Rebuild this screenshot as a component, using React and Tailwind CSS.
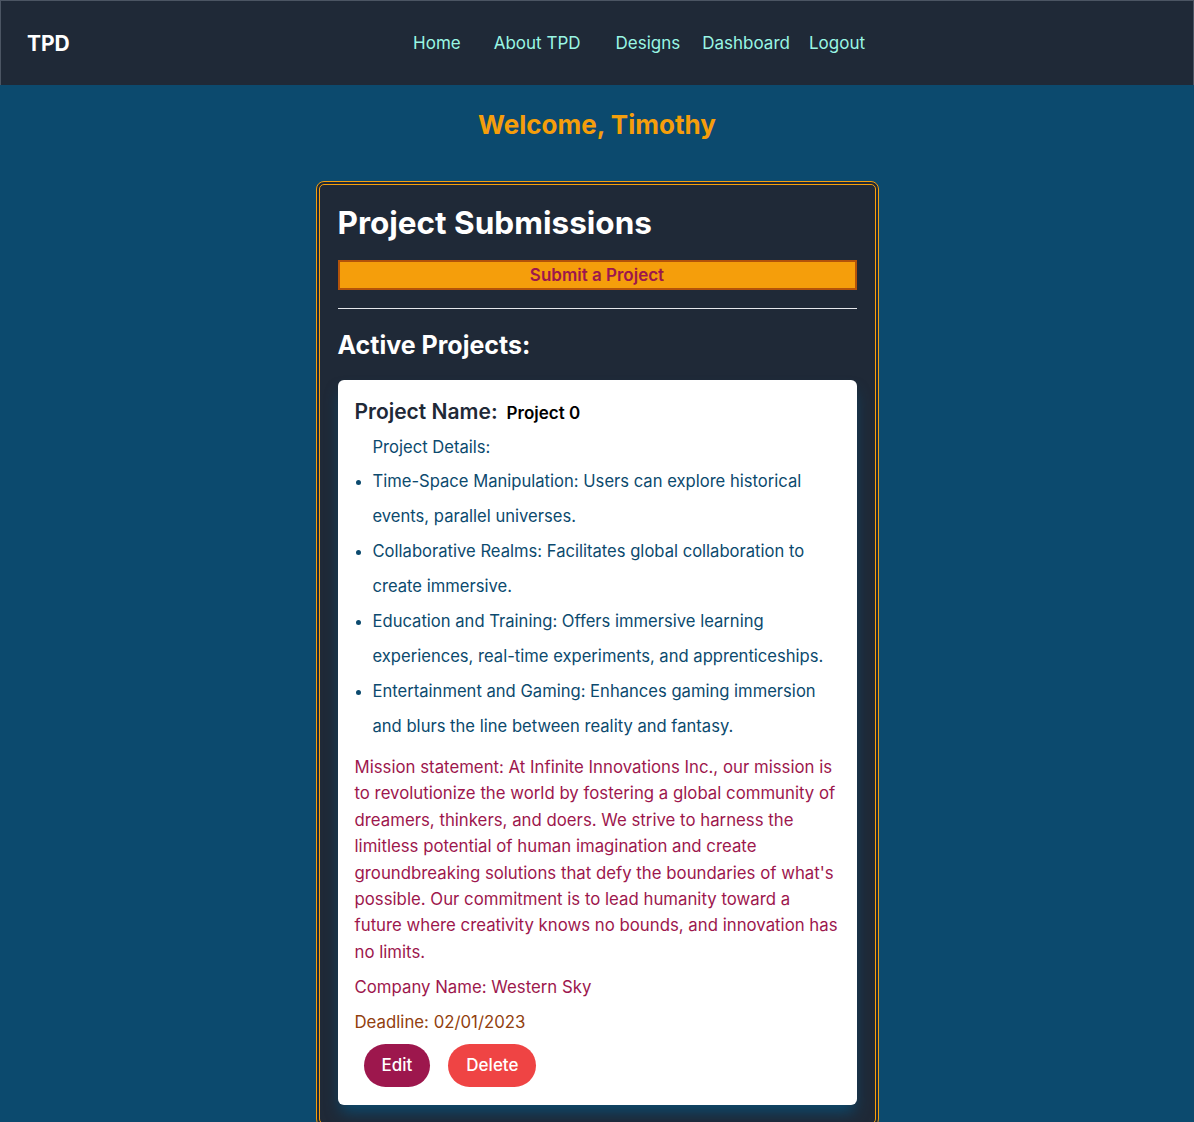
import React from 'react';

const details = [
    'Time-Space Manipulation: Users can explore historical events, parallel universes.',
    'Collaborative Realms: Facilitates global collaboration to create immersive.',
    'Education and Training: Offers immersive learning experiences, real-time experiments, and apprenticeships.',
    'Entertainment and Gaming: Enhances gaming immersion and blurs the line between reality and fantasy.',
];

const mission = "Mission statement: At Infinite Innovations Inc., our mission is to revolutionize the world by fostering a global community of dreamers, thinkers, and doers. We strive to harness the limitless potential of human imagination and create groundbreaking solutions that defy the boundaries of what's possible. Our commitment is to lead humanity toward a future where creativity knows no bounds, and innovation has no limits.";

function NavBar() {
    return (
        <header className="h-[85px] bg-[#1f2937] border-t border-x border-[#4b5563] flex items-center">
            <div className="pl-[26px] text-[21px] font-bold text-white leading-none">TPD</div>
            <nav className="ml-auto mr-[328px] flex items-center text-[17px] text-[#99f6e4] pt-[2px]">
                <a className="mr-[33px]">Home</a>
                <a className="mr-[35px]">About TPD</a>
                <a className="mr-[22px]">Designs</a>
                <a className="mr-[19px]">Dashboard</a>
                <a>Logout</a>
            </nav>
        </header>
    );
}

function ProjectCard() {
    return (
        <div className="bg-white rounded-md px-[17px] pt-[18px] pb-[18px] shadow-[0_10px_15px_-3px_#0c4a6e]">
            <div className="flex items-baseline leading-7">
                <span className="text-[21px] font-semibold text-[#1f2937]">Project Name:</span>
                <span className="ml-[9px] text-[17px] font-semibold text-black">Project 0</span>
            </div>
            <p className="mt-[3px] pl-[18px] leading-[34px] text-[16.6px] text-[#0c4a6e]">Project Details:</p>
            <ul className="list-disc pl-[18px] text-[16.6px] text-[#0c4a6e] leading-[35px]">
                {details.map((d, i) => (
                    <li key={i}>{d}</li>
                ))}
            </ul>
            <p className="mt-[10px] leading-[26.4px] text-[16.8px] text-[#9d174d]">{mission}</p>
            <p className="mt-[9px] leading-[26px] text-[16.8px] text-[#9d174d]">Company Name: Western Sky</p>
            <p className="mt-[9px] leading-[26px] text-[16.8px] text-[#92400e]">Deadline: 02/01/2023</p>
            <div className="mt-[9px] ml-[9px] flex gap-[18px]">
                <button className="h-[43px] px-[18px] rounded-full bg-[#9d174d] text-white text-[17px] font-medium">Edit</button>
                <button className="h-[43px] px-[18px] rounded-full bg-[#ef4444] text-white text-[17px] font-medium">Delete</button>
            </div>
        </div>
    );
}

export default function App() {
    return (
        <div className="min-h-screen bg-[#0c4a6e] font-['Inter',sans-serif]">
            <NavBar />
            <h1 className="pt-6 text-center text-[26px] leading-8 font-bold text-[#f59e0b]">Welcome, Timothy</h1>
            <div className="mt-10 mx-auto w-[563px] bg-[#1f2937] border-4 border-double border-[#f59e0b] rounded-lg px-[18px] pt-[20px] pb-[18px]">
                <h2 className="text-[31.5px] leading-9 font-bold text-white">Project Submissions</h2>
                <button className="mt-[19px] w-full h-[30px] pt-[1px] bg-[#f59e0b] border-2 border-[#b45309] text-[#9d174d] text-[17px] font-semibold">
                    Submit a Project
                </button>
                <hr className="mt-[18px] border-[#e5e7eb]" />
                <h3 className="mt-5 text-[25px] leading-8 font-bold text-white">Active Projects:</h3>
                <div className="mt-[19px]">
                    <ProjectCard />
                </div>
            </div>
        </div>
    );
}
